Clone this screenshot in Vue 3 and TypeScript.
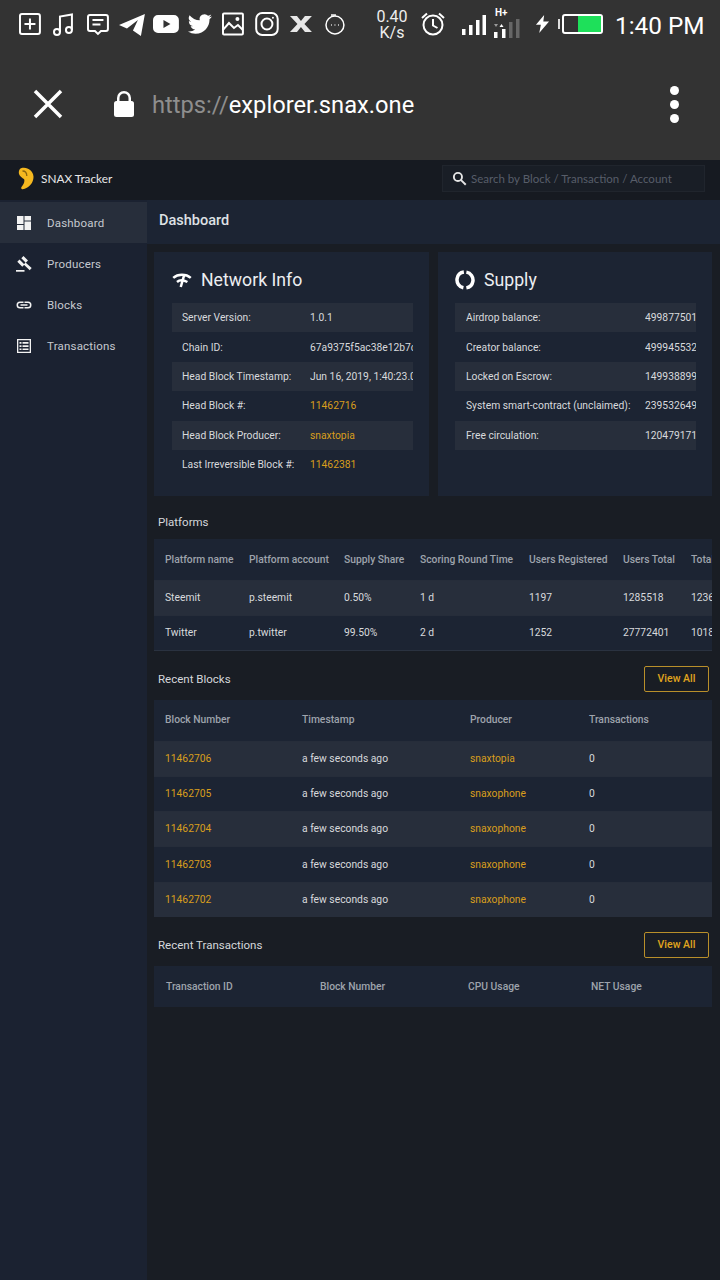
<script setup lang="ts">
const navItems = [
  { name: 'Dashboard', icon: 'dash', active: true },
  { name: 'Producers', icon: 'gavel', active: false },
  { name: 'Blocks', icon: 'link', active: false },
  { name: 'Transactions', icon: 'list', active: false },
]

const networkInfo = [
  { label: 'Server Version:', value: '1.0.1', gold: false },
  { label: 'Chain ID:', value: '67a9375f5ac38e12b7c0a1d6', gold: false },
  { label: 'Head Block Timestamp:', value: 'Jun 16, 2019, 1:40:23.000 PM', gold: false },
  { label: 'Head Block #:', value: '11462716', gold: true },
  { label: 'Head Block Producer:', value: 'snaxtopia', gold: true },
  { label: 'Last Irreversible Block #:', value: '11462381', gold: true },
]

const supply = [
  { label: 'Airdrop balance:', value: '4998775012' },
  { label: 'Creator balance:', value: '4999455321' },
  { label: 'Locked on Escrow:', value: '1499388990' },
  { label: 'System smart-contract (unclaimed):', value: '2395326491' },
  { label: 'Free circulation:', value: '1204791710' },
]

const platformHead = ['Platform name', 'Platform account', 'Supply Share', 'Scoring Round Time', 'Users Registered', 'Users Total', 'Total']
const platforms = [
  ['Steemit', 'p.steemit', '0.50%', '1 d', '1197', '1285518', '1236'],
  ['Twitter', 'p.twitter', '99.50%', '2 d', '1252', '27772401', '1018'],
]

const blocks = [
  { num: '11462706', producer: 'snaxtopia' },
  { num: '11462705', producer: 'snaxophone' },
  { num: '11462704', producer: 'snaxophone' },
  { num: '11462703', producer: 'snaxophone' },
  { num: '11462702', producer: 'snaxophone' },
]
</script>

<template>
  <div class="phone">
    <div class="chrome">
      <div class="status">
        <div class="status-icons">
          <svg viewBox="0 0 24 24" width="24" height="24" fill="none" stroke="#fff" stroke-width="2">
            <rect x="2" y="2" width="20" height="20" rx="2" /><path d="M12 6.5v11M6.5 12h11" />
          </svg>
          <svg viewBox="0 0 24 24" width="24" height="24" fill="none" stroke="#fff" stroke-width="2">
            <circle cx="5" cy="20" r="3" /><circle cx="17" cy="18" r="3" /><path d="M8 20V4.500L20 2.500V18" />
          </svg>
          <svg viewBox="0 0 24 24" width="24" height="24" fill="none" stroke="#fff" stroke-width="2">
            <path d="M4 3h16a2 2 0 0 1 2 2v12a2 2 0 0 1-2 2h-5l-3 3-3-3H4a2 2 0 0 1-2-2V5a2 2 0 0 1 2-2z" /><path d="M6.500 8h11M6.500 12.500h8" />
          </svg>
          <svg class="wide" viewBox="0 0 26 24" width="26" height="24" fill="#fff">
            <path d="M0 13L26 2l-4 22-8-5.500 5-10.500-11 8.500z" />
          </svg>
          <svg class="wide" viewBox="0 0 26 24" width="26" height="24" fill="#fff">
            <path fill-rule="evenodd" d="M5 3h16a5 5 0 0 1 5 5v8a5 5 0 0 1-5 5H5a5 5 0 0 1-5-5V8a5 5 0 0 1 5-5zm5.500 5v8l7-4z" />
          </svg>
          <svg class="wide" viewBox="0 0 24 24" width="26" height="24" fill="#fff">
            <path d="M23.950 4.570a10 10 0 0 1-2.820.770 4.960 4.960 0 0 0 2.160-2.720 9.900 9.900 0 0 1-3.120 1.180 4.920 4.920 0 0 0-8.380 4.480A13.980 13.980 0 0 1 1.640 3.160a4.920 4.920 0 0 0 1.520 6.570 4.900 4.900 0 0 1-2.230-.620v.060a4.920 4.920 0 0 0 3.950 4.830 5 5 0 0 1-2.210.080 4.940 4.940 0 0 0 4.600 3.420A9.870 9.870 0 0 1 0 19.540a14 14 0 0 0 7.560 2.210c9.050 0 14-7.500 14-13.980 0-.210 0-.420-.020-.630a9.940 9.940 0 0 0 2.410-2.570z" />
          </svg>
          <svg viewBox="0 0 24 24" width="24" height="24" fill="none" stroke="#fff" stroke-width="2">
            <rect x="2" y="1.500" width="20" height="21" rx="1" /><path d="M2 18l6-7 5 5 4-3 5 5" /><circle cx="16.500" cy="7" r="1" fill="#fff" />
          </svg>
          <svg viewBox="0 0 24 24" width="24" height="24" fill="none" stroke="#fff" stroke-width="2">
            <rect x="1.200" y="1" width="21.600" height="22" rx="6" /><circle cx="12" cy="12" r="5.500" /><circle cx="18" cy="5.800" r="1" fill="#fff" stroke="none" />
          </svg>
          <svg viewBox="0 0 24 24" width="24" height="24" fill="#e8e8e8">
            <path d="M1 4h7l4 5 4-5h7l-7.500 8 7.500 8h-7l-4-5-4 5H1l7.500-8z" />
          </svg>
          <svg viewBox="0 0 24 24" width="24" height="24" fill="none" stroke="#fff" stroke-width="1.500">
            <circle cx="12" cy="13" r="9" /><path d="M8 3h5" /><path d="M8 13h.8M11.600 13h.8M15.200 13h.8" />
          </svg>
        </div>
        <div class="speed">0.40<br />K/s</div>
        <svg class="alarm" viewBox="0 0 26 26" width="26" height="26" fill="none" stroke="#fff" stroke-width="2">
          <circle cx="13" cy="14" r="9.500" /><path d="M13 8v6.500l4.500 2.500M2 7l5-4.500M24 7l-5-4.500" />
        </svg>
        <svg class="signal" viewBox="0 0 24 20" width="24" height="20" fill="#fff">
          <rect x="0" y="14" width="3.500" height="6" /><rect x="7" y="10" width="3.500" height="10" /><rect x="14" y="5" width="3.500" height="15" /><rect x="20.500" y="0" width="3.500" height="20" />
        </svg>
        <div class="signal-two">
          <span class="hplus">H+</span>
          <svg viewBox="0 0 30 24" width="30" height="24" fill="#fff">
            <rect x="3" y="18" width="3.500" height="6" /><rect x="11" y="15" width="3.500" height="9" /><rect x="18" y="8" width="3.500" height="16" fill="#666" /><rect x="25" y="5" width="3.500" height="19" fill="#666" />
            <path d="M3 10h4l-2 3z" fill="#999" /><path d="M8.500 13l2-3 2 3z" />
          </svg>
        </div>
        <svg class="bolt" viewBox="0 0 16 22" width="15" height="18" fill="#fff">
          <path d="M10 0L0 12h6l-2 10L16 8H9z" />
        </svg>
        <div class="battery-cap"></div>
        <div class="battery"><div class="battery-fill"></div></div>
        <div class="clock">1:40 PM</div>
      </div>
      <div class="urlbar">
        <svg class="close" viewBox="0 0 30 30" width="30" height="30" fill="none" stroke="#fff" stroke-width="3.500">
          <path d="M2 2l26 26M28 2L2 28" />
        </svg>
        <svg class="lock" viewBox="0 0 22 26" width="22" height="26" fill="#fff">
          <path d="M4 10V7a7 7 0 0 1 14 0v3h-2.500V7a4.500 4.500 0 0 0-9 0v3z" /><rect x="1" y="10" width="20" height="16" rx="2.500" />
        </svg>
        <div class="url"><span class="scheme">https://</span>explorer.snax.one</div>
        <div class="dots"><i></i><i></i><i></i></div>
      </div>
    </div>

    <header class="topbar">
      <div class="brand">
        <svg viewBox="0 0 16 22" width="16" height="23">
          <path d="M3 .800C9-1 15 3 15.500 9c.300 6-4 11-9.500 12.500-2 .500-3.500-.500-2.500-2 2.500-3 3.500-6 2.500-8C3.500 10 .800 8 .800 5 .800 3 1.800 1.300 3 .800z" fill="#f5b81f" />
          <path d="M4.500 3.500C7 3.500 8.800 5.500 8.800 8.500" fill="none" stroke="#8a6510" stroke-width="1.300" />
        </svg>
        <span>SNAX Tracker</span>
      </div>
      <div class="search">
        <svg viewBox="0 0 24 24" width="15" height="15" fill="none" stroke="#e6e6e6" stroke-width="3">
          <circle cx="9.500" cy="9.500" r="6.500" /><path d="M14.500 14.500L22 22" />
        </svg>
        <span>Search by Block / Transaction / Account</span>
      </div>
    </header>

    <div class="body">
      <nav class="sidebar">
        <a v-for="item in navItems" :key="item.name" class="nav-item" :class="{ active: item.active }">
          <svg viewBox="0 0 16 16" width="16" height="16" fill="#f2f2f2">
            <template v-if="item.icon === 'dash'">
              <rect x="1" y="1" width="6.500" height="8" /><rect x="8.500" y="1" width="6.500" height="4.500" /><rect x="1" y="10" width="6.500" height="5" /><rect x="8.500" y="6.500" width="6.500" height="8.500" />
            </template>
            <template v-else-if="item.icon === 'gavel'">
              <path d="M7.500 0l4.500 4.500-2.200 2.200-4.500-4.500zM3.500 3.500l5 5-2.200 2.200-5-5zM9.500 6.500l6.200 5.600-2 2.200-6-5.700z" /><rect x="0" y="14" width="8.500" height="1.700" />
            </template>
            <template v-else-if="item.icon === 'link'">
              <path d="M4 4.500h3.500V6H4a2 2 0 0 0 0 4h3.500v1.500H4a3.500 3.500 0 0 1 0-7zM8.500 4.500H12a3.500 3.500 0 0 1 0 7H8.500V10H12a2 2 0 0 0 0-4H8.500zM4.500 7.300h7v1.400h-7z" />
            </template>
            <template v-else>
              <path fill-rule="evenodd" d="M1 1h14v14H1zm1.300 1.300v11.400h11.400V2.300z" /><path d="M3.500 4h2v1.700h-2zM6.500 4h6v1.700h-6zM3.500 7.200h2v1.700h-2zM6.500 7.200h6v1.700h-6zM3.500 10.400h2v1.700h-2zM6.500 10.400h6v1.700h-6z" />
            </template>
          </svg>
          <span>{{ item.name }}</span>
        </a>
      </nav>

      <main class="main">
        <div class="page-title">Dashboard</div>
        <div class="content">
          <div class="cards">
            <section class="card">
              <h2>
                <svg viewBox="0 0 24 20" width="20" height="17" fill="none" stroke="#fff" stroke-width="3">
                  <path d="M1.500 8C7 3 17 3 22.500 8M6 13C9.500 10 13 10 18.500 13" /><path d="M14.500 5L10.500 19" />
                </svg>
                Network Info
              </h2>
              <div v-for="row in networkInfo" :key="row.label" class="info-row net">
                <span>{{ row.label }}</span>
                <span :class="{ gold: row.gold }">{{ row.value }}</span>
              </div>
            </section>
            <section class="card">
              <h2>
                <svg viewBox="0 0 20 20" width="20" height="20" fill="none" stroke="#fff" stroke-width="3.500">
                  <circle cx="10" cy="10" r="8" stroke-dasharray="22.200 3" transform="rotate(-80 10 10)" />
                </svg>
                Supply
              </h2>
              <div v-for="row in supply" :key="row.label" class="info-row sup">
                <span>{{ row.label }}</span>
                <span>{{ row.value }}</span>
              </div>
            </section>
          </div>

          <div class="section-head plain"><span>Platforms</span></div>
          <div class="table platforms">
            <div class="tr th">
              <span v-for="h in platformHead" :key="h">{{ h }}</span>
            </div>
            <div v-for="row in platforms" :key="row[0]" class="tr td">
              <span v-for="(cell, i) in row" :key="i">{{ cell }}</span>
            </div>
          </div>

          <div class="section-head">
            <span>Recent Blocks</span>
            <button class="view-all">View All</button>
          </div>
          <div class="table blocks">
            <div class="tr th">
              <span>Block Number</span><span>Timestamp</span><span>Producer</span><span>Transactions</span>
            </div>
            <div v-for="b in blocks" :key="b.num" class="tr td">
              <span class="gold">{{ b.num }}</span>
              <span>a few seconds ago</span>
              <span class="gold">{{ b.producer }}</span>
              <span>0</span>
            </div>
          </div>

          <div class="section-head">
            <span>Recent Transactions</span>
            <button class="view-all">View All</button>
          </div>
          <div class="table txs">
            <div class="tr th">
              <span>Transaction ID</span><span>Block Number</span><span>CPU Usage</span><span>NET Usage</span>
            </div>
          </div>
        </div>
      </main>
    </div>
  </div>
</template>

<style>
html, body {
  margin: 0;
  background: #191d24;
}
</style>

<style scoped>
.phone {
  width: 720px;
  height: 1280px;
  display: flex;
  flex-direction: column;
  overflow: hidden;
  font-family: Roboto, "Liberation Sans", sans-serif;
  background: #191d24;
  color: #e4e6ea;
}

.chrome {
  height: 160px;
  flex: none;
  background: #333333;
  color: #fff;
}

.status {
  height: 48px;
  padding: 0 0 0 18px;
  display: flex;
  align-items: center;
}
.status-icons {
  display: flex;
  align-items: center;
  gap: 10px;
  width: 329px;
  flex: none;
}
.status-icons .wide {
  margin: 0 -1px;
}
.speed {
  width: 32px;
  margin-left: 29px;
  padding-top: 2px;
  font-size: 16px;
  line-height: 16px;
  text-align: center;
  color: #eee;
  flex: none;
}
.alarm {
  margin-left: 12px;
  flex: none;
}
.signal {
  margin-left: 16px;
  margin-top: 2px;
  flex: none;
}
.signal-two {
  position: relative;
  margin-left: 5px;
  margin-top: 4px;
  flex: none;
  height: 24px;
}
.hplus {
  position: absolute;
  left: 4px;
  top: -7px;
  font-size: 10px;
  line-height: 12px;
  font-weight: 700;
}
.bolt {
  margin-left: 14px;
  flex: none;
}
.battery-cap {
  width: 2px;
  height: 10px;
  margin-left: 8px;
  background: #ddd;
  flex: none;
}
.battery {
  width: 37px;
  height: 16px;
  margin-left: 2px;
  border: 2px solid #fff;
  border-radius: 3px;
  display: flex;
  justify-content: flex-end;
  flex: none;
}
.battery-fill {
  width: 23px;
  background: #1ee05a;
}
.clock {
  margin-left: 12px;
  padding-top: 2px;
  font-size: 24.300px;
  white-space: nowrap;
}

.urlbar {
  height: 112px;
  display: flex;
  align-items: center;
}
.urlbar .close {
  margin-left: 33px;
}
.urlbar .lock {
  margin-left: 50px;
}
.url {
  margin-left: 17px;
  font-size: 23.700px;
  margin-top: 2px;
}
.scheme {
  color: #8e8e8e;
}
.dots {
  margin-left: auto;
  margin-right: 41px;
  display: flex;
  flex-direction: column;
  gap: 5px;
}
.dots i {
  display: block;
  width: 9px;
  height: 9px;
  border-radius: 50%;
  background: #fff;
}

.topbar {
  height: 40px;
  flex: none;
  display: flex;
  align-items: center;
  justify-content: space-between;
  padding: 0 15px 4px 18px;
  background: #161a21;
  box-sizing: border-box;
}
.brand {
  display: flex;
  align-items: center;
  gap: 7px;
  font-family: Lato, Roboto, sans-serif;
  font-size: 11.800px;
  color: #e8e8e8;
}
.search {
  width: 263px;
  height: 27px;
  box-sizing: border-box;
  display: flex;
  align-items: center;
  gap: 4px;
  padding-left: 9px;
  border: 1px solid #20252d;
  background: #191e26;
  font-family: Lato, Roboto, sans-serif;
  font-size: 11.500px;
  color: #575d69;
}

.body {
  flex: 1;
  display: flex;
  min-height: 0;
}

.sidebar {
  width: 147px;
  flex: none;
  padding-top: 2px;
  background: #1b2231;
}
.nav-item {
  height: 41px;
  display: flex;
  align-items: center;
  gap: 15px;
  padding-left: 16px;
  font-size: 11.500px;
  letter-spacing: 0.2px;
  color: #c6c9cf;
}
.nav-item.active {
  background: #272e3b;
}

.main {
  flex: 1;
  min-width: 0;
}
.page-title {
  height: 44px;
  padding-left: 12px;
  display: flex;
  align-items: center;
  padding-bottom: 4px;
  box-sizing: border-box;
  background: #1c2433;
  font-size: 14.500px;
  font-weight: 500;
  color: #dfe1e5;
}
.content {
  padding: 8px 8px 0 7px;
}

.cards {
  display: flex;
  gap: 9px;
}
.card {
  flex: 1;
  height: 244px;
  box-sizing: border-box;
  padding: 15px 16px 0 18px;
  background: #1c2433;
}
.card:last-child {
  flex: 0 0 274px;
  padding-left: 17px;
}
.card h2 {
  margin: 0 0 11px;
  height: 25px;
  display: flex;
  align-items: center;
  gap: 9px;
  font-size: 17.700px;
  font-weight: 400;
  color: #eceef1;
}
.info-row {
  height: 29.400px;
  display: grid;
  align-items: center;
  padding-left: 10px;
  overflow: hidden;
  font-size: 10.300px;
  white-space: nowrap;
  color: #d8dadd;
}
.info-row.net {
  grid-template-columns: 128px 1fr;
}
.info-row.sup {
  grid-template-columns: 179px 1fr;
  padding-left: 11px;
}
.info-row:nth-of-type(odd) {
  background: #272e3b;
}
.info-row span {
  overflow: hidden;
}

.gold {
  color: #d99e1c;
}

.section-head {
  display: flex;
  align-items: center;
  justify-content: space-between;
  height: 26px;
  padding: 0 3px 0 4px;
  margin: 14.600px 0 8px;
  font-size: 11.500px;
  color: #d5d7db;
}
.section-head.plain {
  margin: 13px 0 4px;
}

.view-all {
  width: 65px;
  height: 26px;
  padding: 0;
  background: transparent;
  border: 1px solid #b98f2a;
  border-radius: 2px;
  font-family: inherit;
  font-size: 10.500px;
  font-weight: 500;
  color: #e0a51e;
}

.table {
  background: #1c2433;
  overflow: hidden;
  font-size: 10.300px;
}
.tr {
  display: grid;
  align-items: center;
  padding-left: 11px;
  white-space: nowrap;
}
.tr.th {
  height: 41px;
  font-weight: 500;
  color: #9ea3ac;
}
.tr.td {
  height: 35.300px;
  padding-bottom: 1px;
  color: #d8dadd;
  border-top: 1px solid #262d3a;
  box-sizing: border-box;
}
.tr.td:nth-child(even) {
  background: #272e3b;
}
.platforms .tr {
  grid-template-columns: 84px 95px 76px 109px 94px 68px 60px;
}
.platforms .tr.td {
  height: 35px;
}
.platforms {
  border-bottom: 1px solid #2a3240;
}
.blocks .tr.th {
  padding-bottom: 2px;
  box-sizing: border-box;
}
.blocks .tr {
  grid-template-columns: 137px 168px 119px 100px;
}
.txs .tr {
  grid-template-columns: 154px 148px 123px 100px;
  padding-left: 12px;
}
</style>
